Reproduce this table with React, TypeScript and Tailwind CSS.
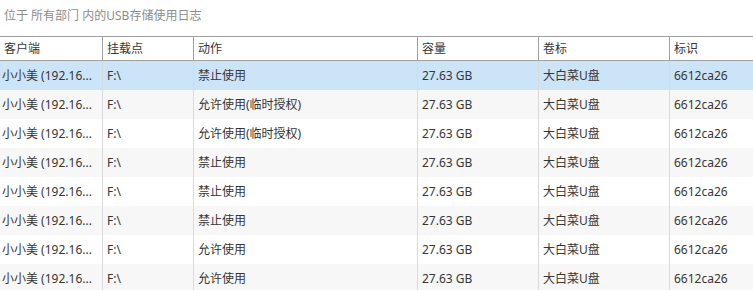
const columns = [
  { title: "客户端", w: "w-[103px]" },
  { title: "挂载点", w: "w-[91px]" },
  { title: "动作", w: "w-[224px]" },
  { title: "容量", w: "w-[121px]" },
  { title: "卷标", w: "w-[131px]" },
  { title: "标识", w: "flex-1" },
];

const actions = [
  "禁止使用",
  "允许使用(临时授权)",
  "允许使用(临时授权)",
  "禁止使用",
  "禁止使用",
  "禁止使用",
  "允许使用",
  "允许使用",
];

// client column is clipped by the grid, so show it the way the grid shows it
const rows = actions.map((action) => [
  "小小美 (192.16...",
  "F:\\",
  action,
  "27.63 GB",
  "大白菜U盘",
  "6612ca26",
]);

export default function App() {
  return (
    <div className="w-[753px] h-[290px] overflow-hidden bg-white text-[12px] text-[#363636] font-['Segoe_UI','Noto_Sans','Noto_Sans_CJK_SC',sans-serif]">
      <div className="h-[36px] pl-[4px] pt-[7px] text-[#8c8c8c]">位于 所有部门 内的USB存储使用日志</div>
      <div className="flex h-[25px] border-y border-[#a0a0a0]">
        {columns.map((c, i) => (
          <div
            key={c.title}
            className={`${c.w} flex items-center pl-[4px] ${i < columns.length - 1 ? "border-r border-[#a0a0a0]" : ""}`}
          >
            {c.title}
          </div>
        ))}
      </div>
      {rows.map((r, ri) => (
        <div
          key={ri}
          className={`flex h-[29px] ${ri === 0 ? "bg-[#cce4f7]" : ri % 2 === 1 ? "bg-[#f7f7f7]" : "bg-white"}`}
        >
          {r.map((cell, ci) => (
            <div
              key={ci}
              className={`${columns[ci].w} flex items-center min-w-0 ${ci === 0 ? "pl-[2px]" : "pl-[4px]"} ${ci < columns.length - 1 ? "border-r border-[#dadada]" : ""}`}
            >
              <span className="whitespace-nowrap">{cell}</span>
            </div>
          ))}
        </div>
      ))}
    </div>
  );
}
